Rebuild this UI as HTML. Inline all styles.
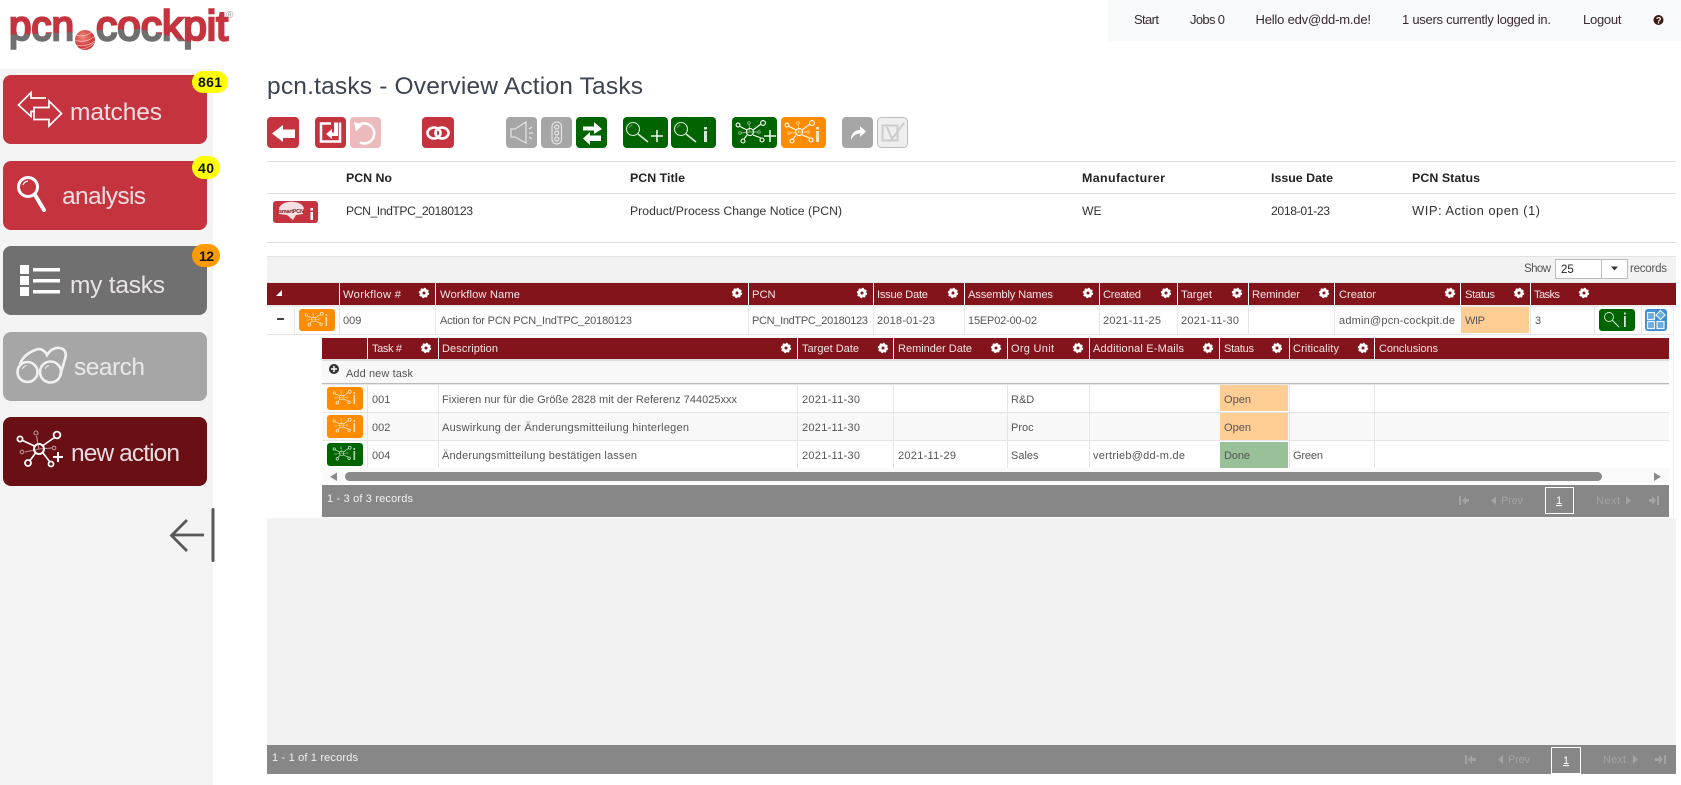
<!DOCTYPE html>
<html lang="en"><head><meta charset="utf-8"><title>pcn.tasks - Overview Action Tasks</title>
<style>
html,body{margin:0;padding:0;background:#fff;width:1681px;height:785px;overflow:hidden}
svg{display:block}
text{font-family:"Liberation Sans",sans-serif;white-space:pre}
.h{font-size:11.2px;fill:#f2e6e6}
.s{font-size:11px;fill:#f2e6e6}
.b{font-size:11px;fill:#555}
.p{font-size:12.2px;fill:#333}
.pb{font-size:12.4px;fill:#222;font-weight:bold}
.n{font-size:13px;fill:#3a2a30}
.m{font-size:24.5px;fill:#f4eef2;fill-opacity:.92}
.g{font-size:11px;fill:#a3a3a3}
.w{font-size:11px;fill:#f0f0f0}
</style></head><body>
<svg xmlns="http://www.w3.org/2000/svg" width="1681" height="785" viewBox="0 0 1681 785">
<defs>
<pattern id="lg" patternUnits="userSpaceOnUse" width="240" height="60">
<rect width="240" height="60" fill="#c5333f"/>
<path d="M0 35 L60 33 L100 30 L140 29 L170 36 L190 42 L240 44 V60 H0Z" fill="#6f6f6f"/>
</pattern>
<radialGradient id="sph" cx=".4" cy=".35"><stop offset="0" stop-color="#f08a80"/><stop offset="1" stop-color="#cf3b3c"/></radialGradient>
<g id="gear">
<circle r="3" fill="none" stroke="#fff" stroke-width="3"/>
<circle r="4.6" fill="none" stroke="#fff" stroke-width="1.2" stroke-dasharray="1.8 1.8"/>
</g>
<g id="net" fill="none" stroke="#fff" stroke-width="1.1">
<g opacity=".55" stroke-width=".9"><path d="M18 15L17 7M18 15L26 15M18 15L9 16"/><circle cx="17" cy="6" r="1.3"/><circle cx="27" cy="15" r="1.3"/><circle cx="8" cy="16" r="1.3"/></g>
<path d="M15 13L7 9M21 13L29 7M15 18L12 22M21 18L29 21"/>
<circle cx="18" cy="15" r="3.5"/><circle cx="6" cy="8" r="1.9"/><circle cx="31" cy="6" r="2.4"/><circle cx="11" cy="24" r="2"/><circle cx="30" cy="23" r="2"/>
</g>
<g id="neti" opacity=".85"><use href="#net" transform="translate(3.5,1) scale(.62)"/><rect x="26.5" y="8" width="1.6" height="9" fill="#fff" opacity=".85"/><rect x="26.5" y="5" width="1.6" height="1.8" fill="#fff" opacity=".85"/></g>
<g id="lensbig" fill="none" stroke="#d8e8d8"><circle cx="10" cy="12" r="6.5" stroke-width="1.1"/><path d="M15 17L25 25" stroke-width="1.6"/><path d="M6.5 11a3.5 3.5 0 0 1 3-3" stroke-width=".8" opacity=".6"/></g>
</defs>

<!-- logo -->
<text x="9" y="40" font-size="42" fill="url(#lg)" stroke="url(#lg)" stroke-width="2.400" textLength="65" lengthAdjust="spacingAndGlyphs">pcn</text>
<text x="96" y="40" font-size="42" fill="url(#lg)" stroke="url(#lg)" stroke-width="2.400" textLength="132" lengthAdjust="spacingAndGlyphs">cockpit</text>
<circle cx="85" cy="40" r="10" fill="url(#sph)"/>
<path d="M76 35q9 3 17-4M75 40q10 4 20-4M76 45q10 3 19-4M80 49q8 0 14-6" stroke="#fff" stroke-width=".8" fill="none" opacity=".6"/>
<text x="226" y="18" font-size="10" fill="#999">®</text>

<!-- top nav -->
<rect x="1108" y="0" width="573" height="41" fill="#f8f9fa"/>
<text class="n" x="1134" y="24" textLength="25">Start</text>
<text class="n" x="1190" y="24" textLength="35">Jobs 0</text>
<text class="n" x="1255.500" y="24" textLength="115.500">Hello edv@dd-m.de!</text>
<text class="n" x="1402" y="24" textLength="149">1 users currently logged in.</text>
<text class="n" x="1583" y="24" textLength="38.500">Logout</text>
<circle cx="1658.500" cy="20" r="5" fill="#3a1a12"/>
<text x="1656" y="23.500" font-size="9" font-weight="bold" fill="#fff">?</text>

<!-- sidebar -->
<rect x="0" y="69" width="213" height="716" fill="#f4f4f4"/>
<rect x="3" y="75" width="204" height="69" rx="8" fill="#c5333f"/>
<rect x="3" y="161" width="204" height="69" rx="8" fill="#c5333f"/>
<rect x="3" y="246" width="204" height="69" rx="8" fill="#707070"/>
<rect x="3" y="332" width="204" height="69" rx="8" fill="#a6a6a6"/>
<rect x="3" y="417" width="204" height="69" rx="8" fill="#6a1015"/>
<!-- matches icon -->
<g fill="none" stroke="#fff" stroke-width="1.700">
<path d="M46 98H31V92.500L18.500 105L31 116.500V111.500H34"/>
<path d="M33 107.500H49V101L61.500 113.500L49 126V119.500H34V107.500"/>
</g>
<text class="m" x="70" y="120" textLength="92">matches</text>
<!-- analysis icon -->
<circle cx="28" cy="187" r="9.500" fill="none" stroke="#fff" stroke-width="3"/>
<path d="M35 195L44 210" stroke="#fff" stroke-width="4" stroke-linecap="round"/>
<path d="M23 185a6 6 0 0 1 5-4" stroke="#fff" stroke-width="1.300" fill="none"/>
<text class="m" x="62" y="204" textLength="84">analysis</text>
<!-- my tasks icon -->
<g fill="#fff">
<rect x="20" y="265" width="9" height="9"/><rect x="20" y="276" width="9" height="9"/><rect x="20" y="287" width="9" height="9"/>
<rect x="33" y="268" width="27" height="3.500"/><rect x="33" y="279" width="27" height="3.500"/><rect x="33" y="290" width="27" height="3.500"/>
</g>
<text class="m" x="70" y="293" textLength="95">my tasks</text>
<!-- search icon -->
<g fill="none" stroke="#f1f1f1" stroke-width="2.600">
<circle cx="27.500" cy="372" r="10"/><circle cx="50.500" cy="372" r="10.500"/>
<path d="M20 364C23 356 30 352 35 350C39 348 44 349 47 355C50 350 55 347 60 348C65 349 67 353 65 359L60 376"/>
<path d="M22.500 369a5.500 5.500 0 0 1 4-3.500M45 369a5.500 5.500 0 0 1 4-3.500" stroke-width="1"/>
</g>
<text class="m" x="74" y="375" textLength="71" style="fill:#eee">search</text>
<!-- new action icon -->
<g fill="none" stroke="#fff">
<g opacity=".55" stroke-width="1.100"><path d="M39 449L36.500 436M39 449L52 448M39 449L25 452"/><circle cx="36" cy="433" r="2"/><circle cx="54" cy="448" r="1.800"/><circle cx="22" cy="452" r="1.800"/></g>
<g stroke-width="1.600"><path d="M34.500 446L22.500 440.500M43 445.500L54.500 437.500M35.500 453L30 460.500M43 453L49.500 461.500"/></g>
<circle cx="39" cy="449" r="5" stroke-width="2"/><circle cx="20" cy="439" r="2.600" stroke-width="1.800"/><circle cx="57" cy="435" r="3.400" stroke-width="1.800"/><circle cx="28" cy="463" r="3" stroke-width="1.800"/><circle cx="51" cy="464" r="2.500" stroke-width="1.800"/>
</g>
<path d="M58 452v10M53 457h10" stroke="#fff" stroke-width="2"/>
<text class="m" x="71" y="461" textLength="109">new action</text>
<!-- badges -->
<rect x="192" y="71" width="36" height="22" rx="11" fill="#ff0"/>
<text x="198" y="87" font-size="14" font-weight="bold" fill="#111" textLength="24">861</text>
<rect x="192" y="156" width="28" height="23" rx="11.500" fill="#ff0"/>
<text x="198" y="173" font-size="14" font-weight="bold" fill="#111" textLength="16">40</text>
<rect x="192" y="244" width="28" height="23" rx="11.500" fill="#ff9b00"/>
<text x="199" y="261" font-size="14" font-weight="bold" fill="#111" textLength="15">12</text>
<!-- collapse arrow -->
<path d="M204 535H172M187 520L171.500 535.500L187 551" fill="none" stroke="#585858" stroke-width="2.800"/>
<rect x="211.500" y="508" width="3" height="54" rx="1.500" fill="#585858"/>

<!-- title -->
<text x="267" y="94" font-size="24.500" fill="#3b4450" textLength="376">pcn.tasks - Overview Action Tasks</text>

<!-- toolbar -->
<g>
<rect x="267" y="117" width="32" height="31" rx="4" fill="#c5333f"/>
<path d="M272 133.500L283 125V129.500H295V138H283V142Z" fill="#fff"/>
<rect x="315" y="117" width="31" height="31" rx="4" fill="#c5333f"/>
<path d="M331 123.500H321V141.500H340V122.500" fill="none" stroke="#fff" stroke-width="2.500"/>
<path d="M334 122.500H338V136H332V139L326 134L332 129V132.500H334Z" fill="#fff"/>
<rect x="350" y="117" width="31" height="31" rx="4" fill="#ecb9bc"/>
<path d="M357 126.500A10 10 0 1 1 360 142.500" fill="none" stroke="#fff" stroke-width="2.600"/>
<path d="M354 122L362.500 125L356 131.500Z" fill="#fff"/>
<rect x="422" y="117" width="32" height="31" rx="4" fill="#c5333f"/>
<g fill="none" stroke="#fff" stroke-width="2.600"><ellipse cx="434" cy="133" rx="6.500" ry="5.500"/><ellipse cx="442" cy="133" rx="6.500" ry="5.500"/></g>

<rect x="506" y="117" width="31" height="31" rx="4" fill="#a6a6a6"/>
<path d="M511 129H515L526 122V143L515 137H511Z" fill="none" stroke="#e4e4e4" stroke-width="1.200"/>
<path d="M529 129L532 127M529 133H533M529 137L532 139" stroke="#e4e4e4" stroke-width="1.200"/>
<rect x="541" y="117" width="31" height="31" rx="4" fill="#a6a6a6"/>
<rect x="552" y="122" width="9.500" height="22" rx="4.500" fill="none" stroke="#e6e6e6" stroke-width="1.200"/>
<g fill="none" stroke="#e6e6e6" stroke-width="1.200"><circle cx="556.750" cy="127" r="2"/><circle cx="556.750" cy="133" r="2"/><circle cx="556.750" cy="139" r="2"/></g>
<rect x="576" y="117" width="31" height="31" rx="4" fill="#006400"/>
<path d="M583 126.500H594V122L602 129L594 134V130.500H583Z" fill="#fff"/>
<path d="M601 135.500H590V132L583 138.500L590 145V141H601Z" fill="#fff"/>

<rect x="623" y="117" width="45" height="31" rx="4" fill="#006400"/>
<use href="#lensbig" transform="translate(623,117)"/>
<path d="M657 130v12M651 136h12" stroke="#eaf3ea" stroke-width="1.600"/>
<rect x="671" y="117" width="45" height="31" rx="4" fill="#006400"/>
<use href="#lensbig" transform="translate(671,117)"/>
<rect x="704" y="131" width="3" height="11" fill="#dbe9db"/><rect x="704" y="127" width="3" height="2.500" fill="#dbe9db"/>

<rect x="732" y="117" width="45" height="31" rx="4" fill="#006400"/>
<use href="#net" transform="translate(732,117)"/>
<path d="M770 130v12M764 136h12" stroke="#eaf3ea" stroke-width="1.600"/>
<rect x="781" y="117" width="45" height="31" rx="4" fill="#ff8c00"/>
<use href="#net" transform="translate(781,117)"/>
<rect x="816" y="131" width="3" height="11" fill="#ffe3bd"/><rect x="816" y="127" width="3" height="2.500" fill="#ffe3bd"/>

<rect x="842" y="117" width="31" height="31" rx="4" fill="#a6a6a6"/>
<path d="M851 140C851 133 855 130 860 130V126L866 131.500L860 137V133.500C856 133.500 853 136 851 140Z" fill="#fff"/>
<rect x="877.500" y="117.500" width="30" height="30" rx="4" fill="#eee" stroke="#bbb"/>
<rect x="882.500" y="125.500" width="15" height="15" fill="none" stroke="#ccc" stroke-width="2"/>
<path d="M887 127L892 139L904 123" fill="none" stroke="#ccc" stroke-width="2"/>
</g>

<!-- PCN summary -->
<rect x="267" y="161" width="1409" height="1" fill="#dedede"/>
<rect x="267" y="193" width="1409" height="1" fill="#dedede"/>
<rect x="267" y="242" width="1409" height="1" fill="#dedede"/>
<text class="pb" x="346" y="182" textLength="46">PCN No</text>
<text class="pb" x="630" y="182" textLength="55">PCN Title</text>
<text class="pb" x="1082" y="182" textLength="83">Manufacturer</text>
<text class="pb" x="1271" y="182" textLength="62">Issue Date</text>
<text class="pb" x="1412" y="182" textLength="68">PCN Status</text>
<rect x="273" y="201" width="45" height="22" rx="3" fill="#c5333f"/>
<path d="M279 209A12 7 0 0 1 304 209L303 214L296 215L293 220L287 215L279 214Z" fill="#f5dfe0"/>
<text x="279" y="213" font-size="5.500" font-weight="bold" fill="#7a2028" textLength="25">smartPCN</text>
<rect x="310.500" y="212" width="2.500" height="8" fill="#fff"/><rect x="310.500" y="208" width="2.500" height="2.500" fill="#fff"/>
<text class="p" x="346" y="215" textLength="127">PCN_IndTPC_20180123</text>
<text class="p" x="630" y="215" textLength="212">Product/Process Change Notice (PCN)</text>
<text class="p" x="1082" y="215">WE</text>
<text class="p" x="1271" y="215" textLength="59">2018-01-23</text>
<text class="p" x="1412" y="215" textLength="128" style="font-size:13px">WIP: Action open (1)</text>

<!-- outer grid -->
<rect x="267" y="256" width="1409" height="518" fill="#f2f2f2"/>
<rect x="267" y="256" width="1409" height="1" fill="#e2e2e2"/>
<rect x="267" y="282" width="1409" height="1" fill="#e2e2e2"/>
<text x="1524" y="272" font-size="11.500" fill="#555" textLength="27">Show</text>
<rect x="1555.500" y="259.500" width="72" height="19" fill="#fff" stroke="#bbb"/>
<rect x="1601" y="260" width="1" height="18" fill="#bbb"/>
<text x="1561" y="273" font-size="11.500" fill="#222">25</text>
<path d="M1611 266.500h7l-3.500 4z" fill="#333"/>
<text x="1630" y="272" font-size="11.500" fill="#555" textLength="37">records</text>

<!-- main header -->
<rect x="267" y="283" width="1409" height="22" fill="#84141b"/>
<path d="M276 296L282 290V296Z" fill="#fff"/>
<g fill="#fff">
<rect x="339" y="283" width="1" height="22"/><rect x="435" y="283" width="1" height="22"/><rect x="748" y="283" width="1" height="22"/><rect x="873" y="283" width="1" height="22"/><rect x="964" y="283" width="1" height="22"/><rect x="1099" y="283" width="1" height="22"/><rect x="1177" y="283" width="1" height="22"/><rect x="1248" y="283" width="1" height="22"/><rect x="1334" y="283" width="1" height="22"/><rect x="1460" y="283" width="1" height="22"/><rect x="1530" y="283" width="1" height="22"/>
</g>
<text class="h" x="343" y="298" textLength="58">Workflow #</text>
<text class="h" x="440" y="298" textLength="80">Workflow Name</text>
<text class="h" x="752" y="298">PCN</text>
<text class="h" x="877" y="298" textLength="51">Issue Date</text>
<text class="h" x="968" y="298" textLength="85">Assembly Names</text>
<text class="h" x="1103" y="298" textLength="38">Created</text>
<text class="h" x="1181" y="298" textLength="31">Target</text>
<text class="h" x="1252" y="298" textLength="48">Reminder</text>
<text class="h" x="1339" y="298" textLength="37">Creator</text>
<text class="h" x="1465" y="298" textLength="30">Status</text>
<text class="h" x="1534" y="298" textLength="26">Tasks</text>
<g>
<use href="#gear" transform="translate(424,293)"/><use href="#gear" transform="translate(737,293)"/><use href="#gear" transform="translate(862,293)"/><use href="#gear" transform="translate(953,293)"/><use href="#gear" transform="translate(1088,293)"/><use href="#gear" transform="translate(1166,293)"/><use href="#gear" transform="translate(1237,293)"/><use href="#gear" transform="translate(1324,293)"/><use href="#gear" transform="translate(1450,293)"/><use href="#gear" transform="translate(1519,293)"/><use href="#gear" transform="translate(1584,293)"/>
</g>

<!-- white area -->
<rect x="267" y="305" width="1409" height="213" fill="#fff"/>
<rect x="267" y="305" width="1409" height="2" fill="#eaeaea"/>
<rect x="267" y="334" width="1406" height="1" fill="#e4e4e4"/>
<rect x="1673" y="306" width="1" height="212" fill="#eee"/>
<g fill="#e6e6e6">
<rect x="294" y="306" width="1" height="28"/><rect x="339" y="306" width="1" height="28"/><rect x="435" y="306" width="1" height="28"/><rect x="748" y="306" width="1" height="28"/><rect x="873" y="306" width="1" height="28"/><rect x="964" y="306" width="1" height="28"/><rect x="1099" y="306" width="1" height="28"/><rect x="1177" y="306" width="1" height="28"/><rect x="1248" y="306" width="1" height="28"/><rect x="1334" y="306" width="1" height="28"/><rect x="1530" y="306" width="1" height="28"/><rect x="1594" y="306" width="1" height="28"/><rect x="1641" y="306" width="1" height="28"/>
</g>
<rect x="1461" y="307" width="68" height="26" fill="#fdcd94"/>
<rect x="277" y="318" width="7" height="2" fill="#444"/>
<rect x="299" y="309" width="36" height="22" rx="3" fill="#ff8c00"/>
<use href="#neti" transform="translate(299,309)"/>
<text class="b" x="343" y="324">009</text>
<text class="b" x="440" y="324" textLength="192">Action for PCN PCN_IndTPC_20180123</text>
<text class="b" x="752" y="324" textLength="116">PCN_IndTPC_20180123</text>
<text class="b" x="877" y="324" textLength="58">2018-01-23</text>
<text class="b" x="968" y="324" textLength="69">15EP02-00-02</text>
<text class="b" x="1103" y="324" textLength="58">2021-11-25</text>
<text class="b" x="1181" y="324" textLength="58">2021-11-30</text>
<text class="b" x="1339" y="324" textLength="116">admin@pcn-cockpit.de</text>
<text class="b" x="1465" y="324" textLength="20">WIP</text>
<text class="b" x="1535" y="324">3</text>
<rect x="1599" y="309" width="36" height="22" rx="3" fill="#006400"/>
<g fill="none" stroke="#d5e6d5" stroke-width=".9"><circle cx="1609" cy="317" r="4.500"/><path d="M1612.500 320.500L1619 327" stroke-width="1.200"/></g>
<rect x="1624" y="316" width="1.800" height="11" fill="#d5e6d5"/><rect x="1624" y="312.500" width="1.800" height="2" fill="#d5e6d5"/>
<rect x="1645" y="309" width="22" height="22" rx="3" fill="#3d8fd1"/>
<g fill="#fff" fill-opacity=".25" stroke="#e8f3fb" stroke-width="1.200"><rect x="1647.500" y="312.500" width="7" height="7"/><path d="M1660.500 310.500L1665 315L1660.500 319.500L1656 315Z"/><rect x="1647.500" y="321.500" width="7" height="7"/><rect x="1657" y="321.500" width="7" height="7"/></g>

<!-- sub header -->
<rect x="322" y="338" width="1347" height="21" fill="#84141b"/>
<g fill="#fff">
<rect x="367" y="338" width="1" height="21"/><rect x="438" y="338" width="1" height="21"/><rect x="797" y="338" width="1" height="21"/><rect x="893" y="338" width="1" height="21"/><rect x="1007" y="338" width="1" height="21"/><rect x="1089" y="338" width="1" height="21"/><rect x="1219" y="338" width="1" height="21"/><rect x="1289" y="338" width="1" height="21"/><rect x="1374" y="338" width="1" height="21"/>
</g>
<text class="s" x="372" y="352" textLength="30">Task #</text>
<text class="s" x="442" y="352" textLength="56">Description</text>
<text class="s" x="802" y="352" textLength="57">Target Date</text>
<text class="s" x="898" y="352" textLength="74">Reminder Date</text>
<text class="s" x="1011" y="352" textLength="43">Org Unit</text>
<text class="s" x="1093" y="352" textLength="91">Additional E-Mails</text>
<text class="s" x="1224" y="352" textLength="30">Status</text>
<text class="s" x="1293" y="352" textLength="46">Criticality</text>
<text class="s" x="1379" y="352" textLength="59">Conclusions</text>
<use href="#gear" transform="translate(426,348)"/><use href="#gear" transform="translate(786,348)"/><use href="#gear" transform="translate(883,348)"/><use href="#gear" transform="translate(996,348)"/><use href="#gear" transform="translate(1078,348)"/><use href="#gear" transform="translate(1208,348)"/><use href="#gear" transform="translate(1277,348)"/><use href="#gear" transform="translate(1363,348)"/>

<!-- add new task -->
<rect x="322" y="359" width="1347" height="2" fill="#ddd"/>
<rect x="322" y="361" width="1347" height="22" fill="#f8f8f8"/>
<rect x="322" y="383" width="1347" height="1" fill="#bbb"/>
<circle cx="334" cy="369" r="5" fill="#333"/>
<path d="M334 366v6M331 369h6" stroke="#fff" stroke-width="1.500"/>
<text class="b" x="346" y="377" textLength="67">Add new task</text>

<!-- task rows -->
<rect x="322" y="384" width="1347" height="1" fill="#e6e6e6"/>
<rect x="322" y="412" width="1347" height="1" fill="#e4e4e4"/>
<rect x="322" y="413" width="1347" height="28" fill="#f8f8f8"/>
<rect x="322" y="440" width="1347" height="1" fill="#e4e4e4"/>
<g fill="#e6e6e6">
<rect x="367" y="385" width="1" height="83"/><rect x="438" y="385" width="1" height="83"/><rect x="797" y="385" width="1" height="83"/><rect x="893" y="385" width="1" height="83"/><rect x="1007" y="385" width="1" height="83"/><rect x="1089" y="385" width="1" height="83"/><rect x="1289" y="385" width="1" height="83"/><rect x="1374" y="385" width="1" height="83"/>
</g>
<rect x="1220" y="385" width="68" height="26" fill="#fdcd94"/>
<rect x="1220" y="413" width="68" height="27" fill="#fdcd94"/>
<rect x="1220" y="442" width="68" height="26" fill="#99c199"/>
<rect x="327" y="387" width="36" height="23" rx="3" fill="#ff8c00"/><use href="#neti" transform="translate(327,387)"/>
<rect x="327" y="415" width="36" height="23" rx="3" fill="#ff8c00"/><use href="#neti" transform="translate(327,415)"/>
<rect x="327" y="443" width="36" height="23" rx="3" fill="#006400"/><use href="#neti" transform="translate(327,443)"/>
<text class="b" x="372" y="403">001</text>
<text class="b" x="442" y="403" textLength="295">Fixieren nur für die Größe 2828 mit der Referenz 744025xxx</text>
<text class="b" x="802" y="403" textLength="58">2021-11-30</text>
<text class="b" x="1011" y="403">R&amp;D</text>
<text class="b" x="1224" y="403" textLength="27">Open</text>
<text class="b" x="372" y="431">002</text>
<text class="b" x="442" y="431" textLength="247">Auswirkung der Änderungsmitteilung hinterlegen</text>
<text class="b" x="802" y="431" textLength="58">2021-11-30</text>
<text class="b" x="1011" y="431">Proc</text>
<text class="b" x="1224" y="431" textLength="27">Open</text>
<text class="b" x="372" y="459">004</text>
<text class="b" x="442" y="459" textLength="195">Änderungsmitteilung bestätigen lassen</text>
<text class="b" x="802" y="459" textLength="58">2021-11-30</text>
<text class="b" x="898" y="459" textLength="58">2021-11-29</text>
<text class="b" x="1011" y="459">Sales</text>
<text class="b" x="1093" y="459" textLength="92">vertrieb@dd-m.de</text>
<text class="b" x="1224" y="459" textLength="26">Done</text>
<text class="b" x="1293" y="459" textLength="30">Green</text>

<!-- scrollbar -->
<rect x="322" y="468" width="1347" height="15" fill="#fafafa"/>
<rect x="345" y="472" width="1257" height="9" rx="4.500" fill="#8a8a8a"/>
<path d="M337 472.500V481L330 476.750Z" fill="#8a8a8a"/>
<path d="M1654 472.500V481L1661 476.750Z" fill="#8a8a8a"/>

<!-- sub pager -->
<rect x="322" y="485" width="1347" height="32" fill="#878787"/>
<text class="w" x="327" y="502" textLength="86">1 - 3 of 3 records</text>
<g fill="#a3a3a3">
<rect x="1459" y="496" width="2" height="9"/><path d="M1462 500.500l4-4.500v3h3v3h-3v3z"/>
<path d="M1496 496v9l-5-4.500z"/>
<path d="M1626 496v9l5-4.500z"/>
<rect x="1657" y="496" width="2" height="9"/><path d="M1656 500.500l-4-4.500v3h-3v3h3v3z"/>
</g>
<text class="g" x="1501" y="504" textLength="22">Prev</text>
<text class="g" x="1596" y="504" textLength="24">Next</text>
<rect x="1545.500" y="487.500" width="28" height="26" fill="none" stroke="#fff"/>
<text x="1556" y="504" font-size="11" fill="#fff" text-decoration="underline">1</text>

<!-- bottom pager -->
<rect x="267" y="745" width="1409" height="29" fill="#878787"/>
<text class="w" x="272" y="761" textLength="86">1 - 1 of 1 records</text>
<g fill="#a3a3a3">
<rect x="1465" y="755" width="2" height="9"/><path d="M1468 759.500l4-4.500v3h4v3h-4v3z"/>
<path d="M1503 755v9l-5-4.500z"/>
<path d="M1633 755v9l5-4.500z"/>
<rect x="1664" y="755" width="2" height="9"/><path d="M1663 759.500l-4-4.500v3h-4v3h4v3z"/>
</g>
<text class="g" x="1508" y="763" textLength="22">Prev</text>
<text class="g" x="1603" y="763" textLength="23">Next</text>
<rect x="1551.500" y="747.500" width="29" height="26" fill="none" stroke="#fff"/>
<text x="1563" y="764" font-size="11" fill="#fff" text-decoration="underline">1</text>
</svg>
</body></html>
